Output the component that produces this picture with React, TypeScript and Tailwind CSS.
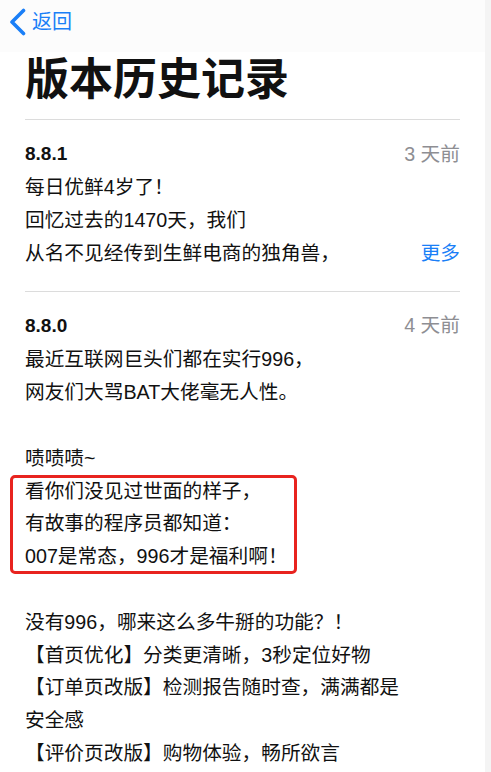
import React from 'react';

const FONT = { fontFamily: '"Liberation Sans", "Noto Sans CJK SC", sans-serif' };

function Line({ children }: { children?: React.ReactNode }) {
  return <p className="h-[32.8px] leading-[32.8px] whitespace-nowrap">{children}</p>;
}

export default function App() {
  return (
    <div className="flex w-[491px] h-[772px] overflow-hidden bg-white text-[#111]" style={FONT}>
      <div className="flex-1 flex flex-col">
        {/* nav bar */}
        <div className="h-[52px] bg-[#fcfcfc] flex items-center pl-[8px] pb-[8px]">
          <svg width="19" height="28" viewBox="0 0 19 28" fill="none">
            <path d="M15.5 2.5 L4 14 L15.5 25.5" stroke="#1a7ff7" strokeWidth="3.6" strokeLinecap="round" strokeLinejoin="round" />
          </svg>
          <span className="ml-[5px] text-[20px] leading-none text-[#1a7ff7]">返回</span>
        </div>

        <div className="px-[25px]">
          <h1 className="text-[44px] font-bold leading-[60px] mt-[-2px] mb-[9px]">版本历史记录</h1>
          <div className="h-px bg-[#dcdcdc]" />

          {/* 8.8.1 */}
          <div className="pt-[20px] pb-[22px] text-[19.7px]">
            <div className="flex justify-between items-center h-[31px] mt-[-1px] mb-[1px]">
              <span className="font-bold text-[19px]">8.8.1</span>
              <span className="text-[#8e8e93]">3 天前</span>
            </div>
            <Line>每日优鲜4岁了！</Line>
            <Line>回忆过去的1470天，我们</Line>
            <div className="flex justify-between">
              <Line>从名不见经传到生鲜电商的独角兽，</Line>
              <span className="leading-[32.8px] text-[#1a7ff7]">更多</span>
            </div>
          </div>
          <div className="h-px bg-[#dcdcdc]" />

          {/* 8.8.0 */}
          <div className="pt-[20px] text-[19.7px]">
            <div className="flex justify-between items-center h-[31px] mt-[-2px] mb-[2px]">
              <span className="font-bold text-[19px]">8.8.0</span>
              <span className="text-[#8e8e93]">4 天前</span>
            </div>
            <Line>最近互联网巨头们都在实行996，</Line>
            <Line>网友们大骂BAT大佬毫无人性。</Line>
            <Line />
            <Line>啧啧啧~</Line>
            <div className="relative">
              <Line>看你们没见过世面的样子，</Line>
              <Line>有故事的程序员都知道：</Line>
              <Line>007是常态，996才是福利啊！</Line>
              <div className="absolute left-[-15px] top-[0px] w-[287px] h-[99px] border-[3px] border-[#e8231f] rounded-[5px]" />
            </div>
            <Line />
            <Line>没有996，哪来这么多牛掰的功能？！</Line>
            <Line>【首页优化】分类更清晰，3秒定位好物</Line>
            <Line>【订单页改版】检测报告随时查，满满都是</Line>
            <Line>安全感</Line>
            <Line>【评价页改版】购物体验，畅所欲言</Line>
          </div>
        </div>
      </div>
      <div className="w-[6px] bg-[#f4f4f4]" />
    </div>
  );
}
